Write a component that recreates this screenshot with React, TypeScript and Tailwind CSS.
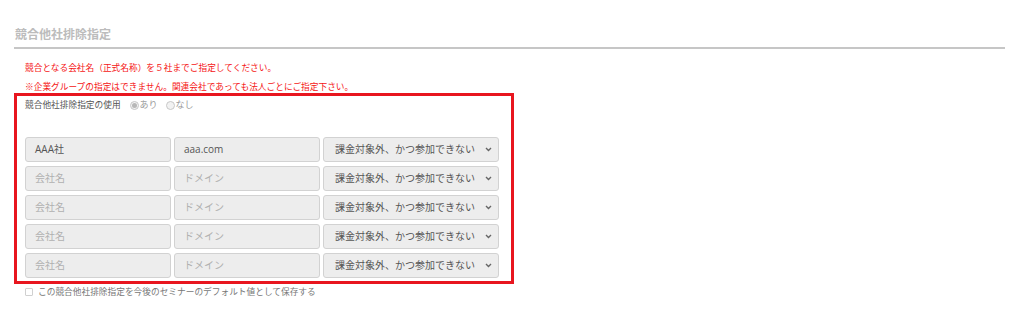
import React from "react";

const font = { fontFamily: '"Open Sans", "Noto Sans CJK JP", sans-serif' };

type Row = { company: string; domain: string };

const rows: Row[] = [
  { company: "AAA社", domain: "aaa.com" },
  { company: "", domain: "" },
  { company: "", domain: "" },
  { company: "", domain: "" },
  { company: "", domain: "" },
];

function Radio({ checked, label }: { checked?: boolean; label: string }) {
  return (
    <span className="flex items-center">
      <span className="flex h-[9px] w-[9px] items-center justify-center rounded-full border border-[#c8c8c8] bg-[#f2f2f2]">
        {checked && <span className="h-[5px] w-[5px] rounded-full bg-[#b8b8b8]" />}
      </span>
      <span className="ml-[1px]">{label}</span>
    </span>
  );
}

function Field({ value, placeholder }: { value: string; placeholder: string }) {
  return (
    <div className="flex h-[25px] w-[146px] items-center rounded-[3px] border border-[#d2d2d2] bg-[#ededed] pl-[9px] text-[10px]">
      {value ? (
        <span className="text-[#555]">{value}</span>
      ) : (
        <span className="text-[#b0b0b0]">{placeholder}</span>
      )}
    </div>
  );
}

function Select() {
  return (
    <div className="flex h-[25px] w-[176px] items-center justify-between rounded-[3px] border border-[#d2d2d2] bg-[#ededed] pl-[11px] pr-[5px] text-[10px] text-[#555]">
      <span>課金対象外、かつ参加できない</span>
      <svg width="7" height="5" viewBox="0 0 7 5" className="mr-[1px]">
        <path d="M1 1 L3.5 3.5 L6 1" fill="none" stroke="#666" strokeWidth="1.4" />
      </svg>
    </div>
  );
}

export default function App() {
  return (
    <div className="h-[329px] w-[1024px] bg-white pl-[14px] pr-[19px] pt-[27px]" style={font}>
      <div className="border-b-2 border-[#c6c6c6] pb-[4px] pl-px text-[12px] font-bold leading-[16px] text-[#bcbcbc]">
        競合他社排除指定
      </div>
      <div className="ml-[11px] mt-[9px] text-[8.7px] leading-[20px] text-[#f51414]">
        競合となる会社名（正式名称）を５社までご指定してください。
      </div>
      <div className="ml-[11px] mt-[3px] text-[8.7px] leading-[12px] text-[#f51414]">
        ※企業グループの指定はできません。関連会社であっても法人ごとにご指定下さい。
      </div>
      <div className="w-[500px] border-[3px] border-[#e8161f] pb-[3px] pl-[8px] pt-[1px]">
        <div className="flex items-center gap-[9px] text-[8.7px] leading-[16px] text-[#555]">
          <span>競合他社排除指定の使用</span>
          <span className="flex items-center gap-[8px] text-[9px] text-[#999]">
            <Radio checked label="あり" />
            <Radio label="なし" />
          </span>
        </div>
        <div className="mt-[24px] flex flex-col gap-[4px]">
          {rows.map((r, i) => (
            <div key={i} className="flex gap-[3px]">
              <Field value={r.company} placeholder="会社名" />
              <Field value={r.domain} placeholder="ドメイン" />
              <Select />
            </div>
          ))}
        </div>
      </div>
      <div className="ml-[11px] mt-[2px] flex items-center gap-[5px] text-[8.7px] leading-[12px] text-[#777]">
        <span className="h-[8px] w-[8px] rounded-[1px] border border-[#d0d0d0] bg-white" />
        <span>この競合他社排除指定を今後のセミナーのデフォルト値として保存する</span>
      </div>
    </div>
  );
}
